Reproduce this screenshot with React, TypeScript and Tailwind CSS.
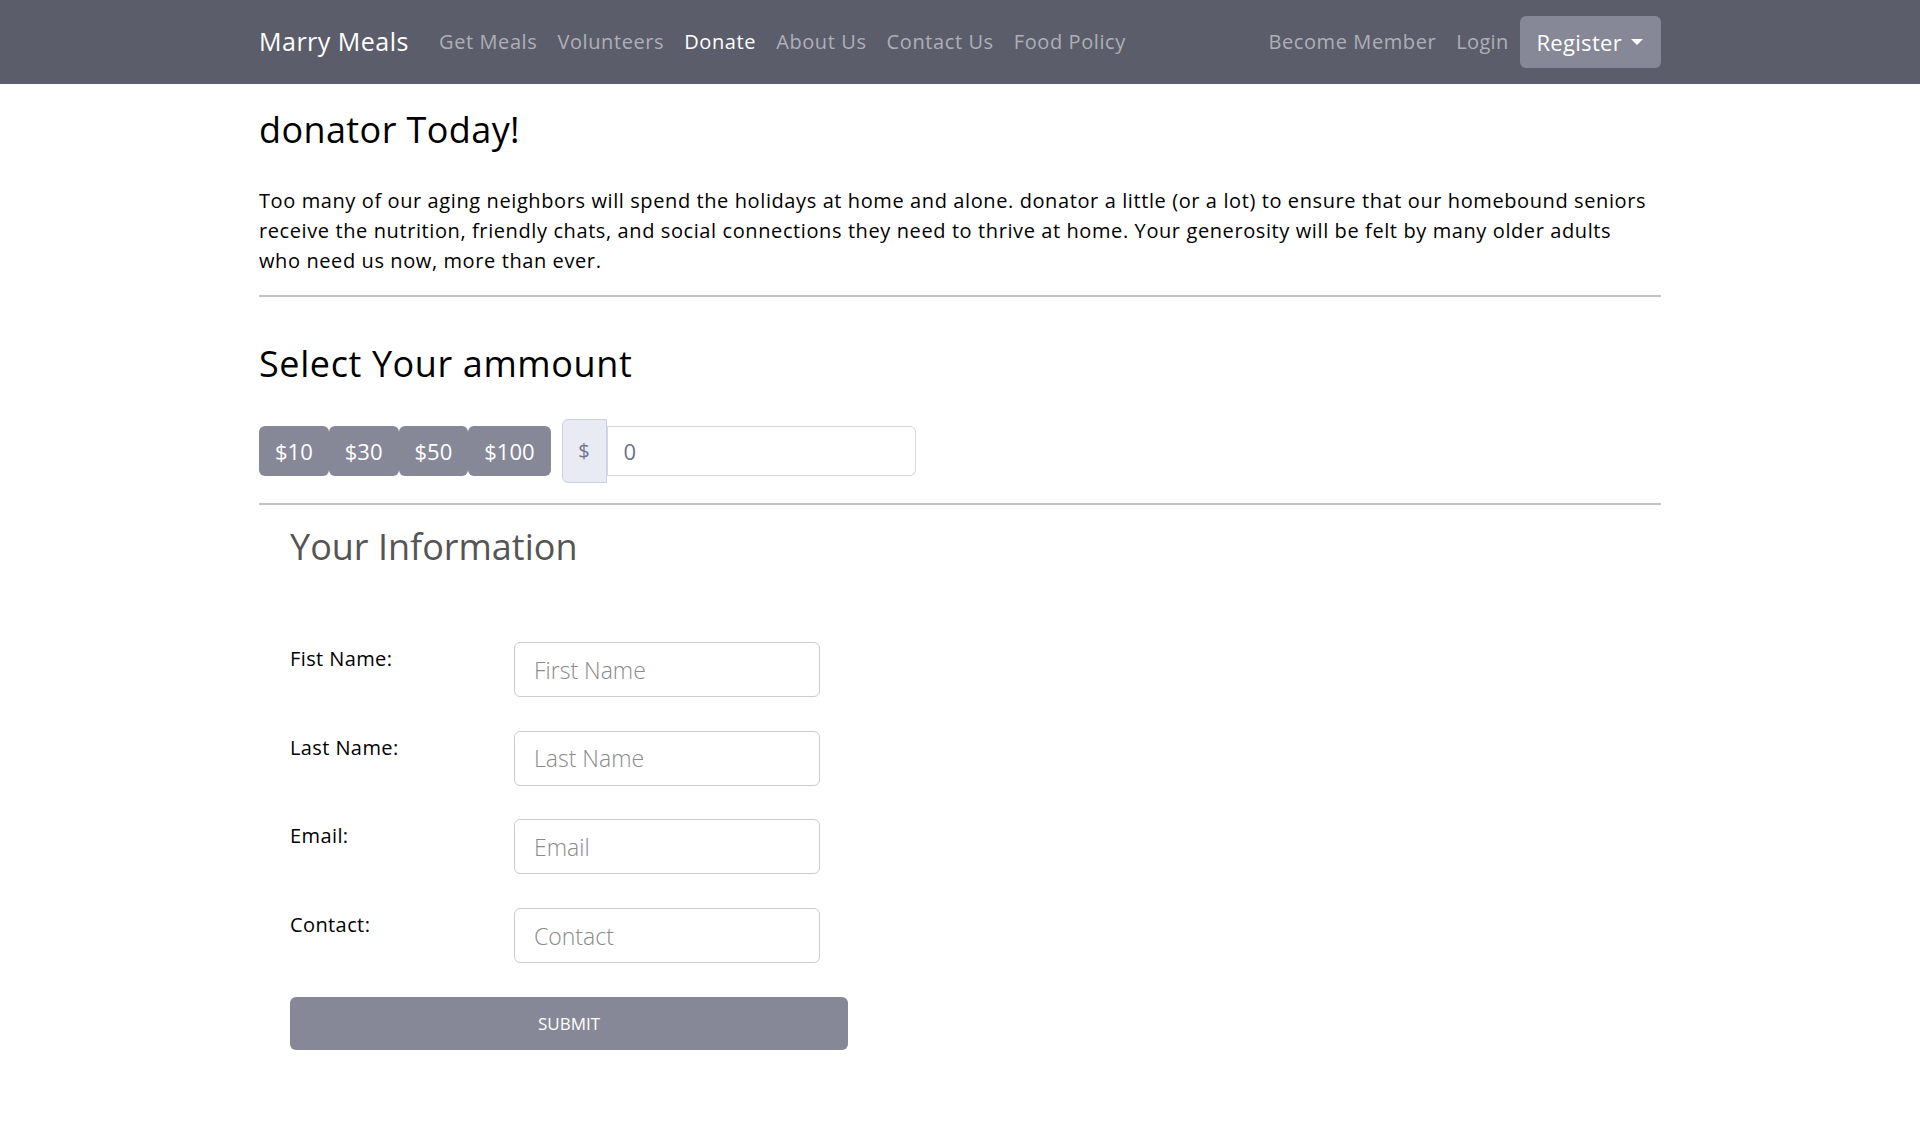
import { useState } from "react";

const amounts = ["$10", "$30", "$50", "$100"];

const fields = [
  { label: "Fist Name:", placeholder: "First Name" },
  { label: "Last Name:", placeholder: "Last Name" },
  { label: "Email:", placeholder: "Email" },
  { label: "Contact:", placeholder: "Contact" },
];

function NavBar() {
  const links = ["Get Meals", "Volunteers", "Donate", "About Us", "Contact Us", "Food Policy"];
  return (
    <nav className="h-[84px] bg-[#5b5d6b]">
      <div className="w-[1402px] mx-auto h-full flex items-center">
        <a className="text-[25px] tracking-[0.5px] text-white mr-[20px]">Marry Meals</a>
        <ul className="flex items-center">
          {links.map((l) => (
            <li key={l}>
              <a className={"px-[10px] text-[20px] tracking-[0.6px] " + (l === "Donate" ? "text-white" : "text-[#aeafb6]")}>
                {l}
              </a>
            </li>
          ))}
        </ul>
        <div className="ml-auto flex items-center">
          <a className="px-[10px] text-[20px] tracking-[0.6px] text-[#aeafb6]">Become Member</a>
          <a className="px-[10px] text-[20px] tracking-[0.3px] text-[#aeafb6]">Login</a>
          <button className="ml-[2px] h-[52px] pl-[16px] pr-[18px] rounded-md bg-[#868897] text-white text-[22px] tracking-[0.3px] flex items-center gap-[9px]">
            Register
            <span className="w-0 h-0 border-l-[6px] border-r-[6px] border-t-[6px] border-l-transparent border-r-transparent border-t-white" />
          </button>
        </div>
      </div>
    </nav>
  );
}

export default function App() {
  const [amount, setAmount] = useState("0");

  return (
    <div className="min-h-screen bg-white text-black font-['Open_Sans',sans-serif]">
      <NavBar />

      <main className="w-[1402px] mx-auto">
        <h2 className="mt-[24px] text-[36px] leading-[43px] tracking-[0.4px] font-normal">donator Today!</h2>
        <p className="mt-[35px] text-[20px] leading-[30px] tracking-[0.6px]">
          Too many of our aging neighbors will spend the holidays at home and alone. donator a little (or a lot) to
          ensure that our homebound seniors
          <br />
          receive the nutrition, friendly chats, and social connections they need to thrive at home. Your generosity
          will be felt by many older adults
          <br />
          who need us now, more than ever.
        </p>
        <hr className="mt-[19px] border-0 h-[2px] bg-[#c2c2c2]" />

        <h2 className="mt-[45px] text-[36px] leading-[43px] tracking-[0.6px] font-normal">Select Your ammount</h2>

        <div className="mt-[34px] h-[64px] flex items-center">
          <div className="flex">
            {amounts.map((a) => (
              <button
                key={a}
                onClick={() => setAmount(a.slice(1))}
                className="h-[50px] px-4 rounded-[6px] bg-[#868897] text-white text-[22px]"
              >
                {a}
              </button>
            ))}
          </div>
          <div className="ml-[11px] flex items-center">
            <span className="h-[64px] w-[45px] flex items-center justify-center bg-[#e8eaf4] border border-[#cdd0e2] rounded-l-[6px] text-[20px] text-[#70738c]">
              $
            </span>
            <input
              value={amount}
              onChange={(e) => setAmount(e.target.value)}
              className="h-[50px] w-[309px] px-4 border border-[#d3d5e4] rounded-r-[6px] text-[22px] text-[#6e7090] outline-none"
            />
          </div>
        </div>

        <hr className="mt-[20px] border-0 h-[2px] bg-[#c2c2c2]" />

        <section className="pl-[31px]">
          <h3 className="mt-[20px] text-[36px] leading-[43px] font-normal text-[#555555]">Your Information</h3>

          <form className="mt-[74px] w-[558px]" onSubmit={(e) => e.preventDefault()}>
            <div className="flex flex-col gap-[33.7px]">
              {fields.map((f) => (
                <div key={f.label} className="flex items-start">
                  <label className="w-[224px] pt-[2px] text-[20px] leading-[30px] tracking-[0.4px]">{f.label}</label>
                  <input
                    placeholder={f.placeholder}
                    className="h-[55px] w-[306px] px-[19px] border border-[#cccccc] rounded-[6px] text-[23px] font-light placeholder:text-[#8a8a8a] outline-none"
                  />
                </div>
              ))}
            </div>
            <button className="mt-[34px] w-full h-[53px] rounded-[6px] bg-[#868897] text-white text-[17px] font-medium uppercase">
              Submit
            </button>
          </form>
        </section>
      </main>
    </div>
  );
}
